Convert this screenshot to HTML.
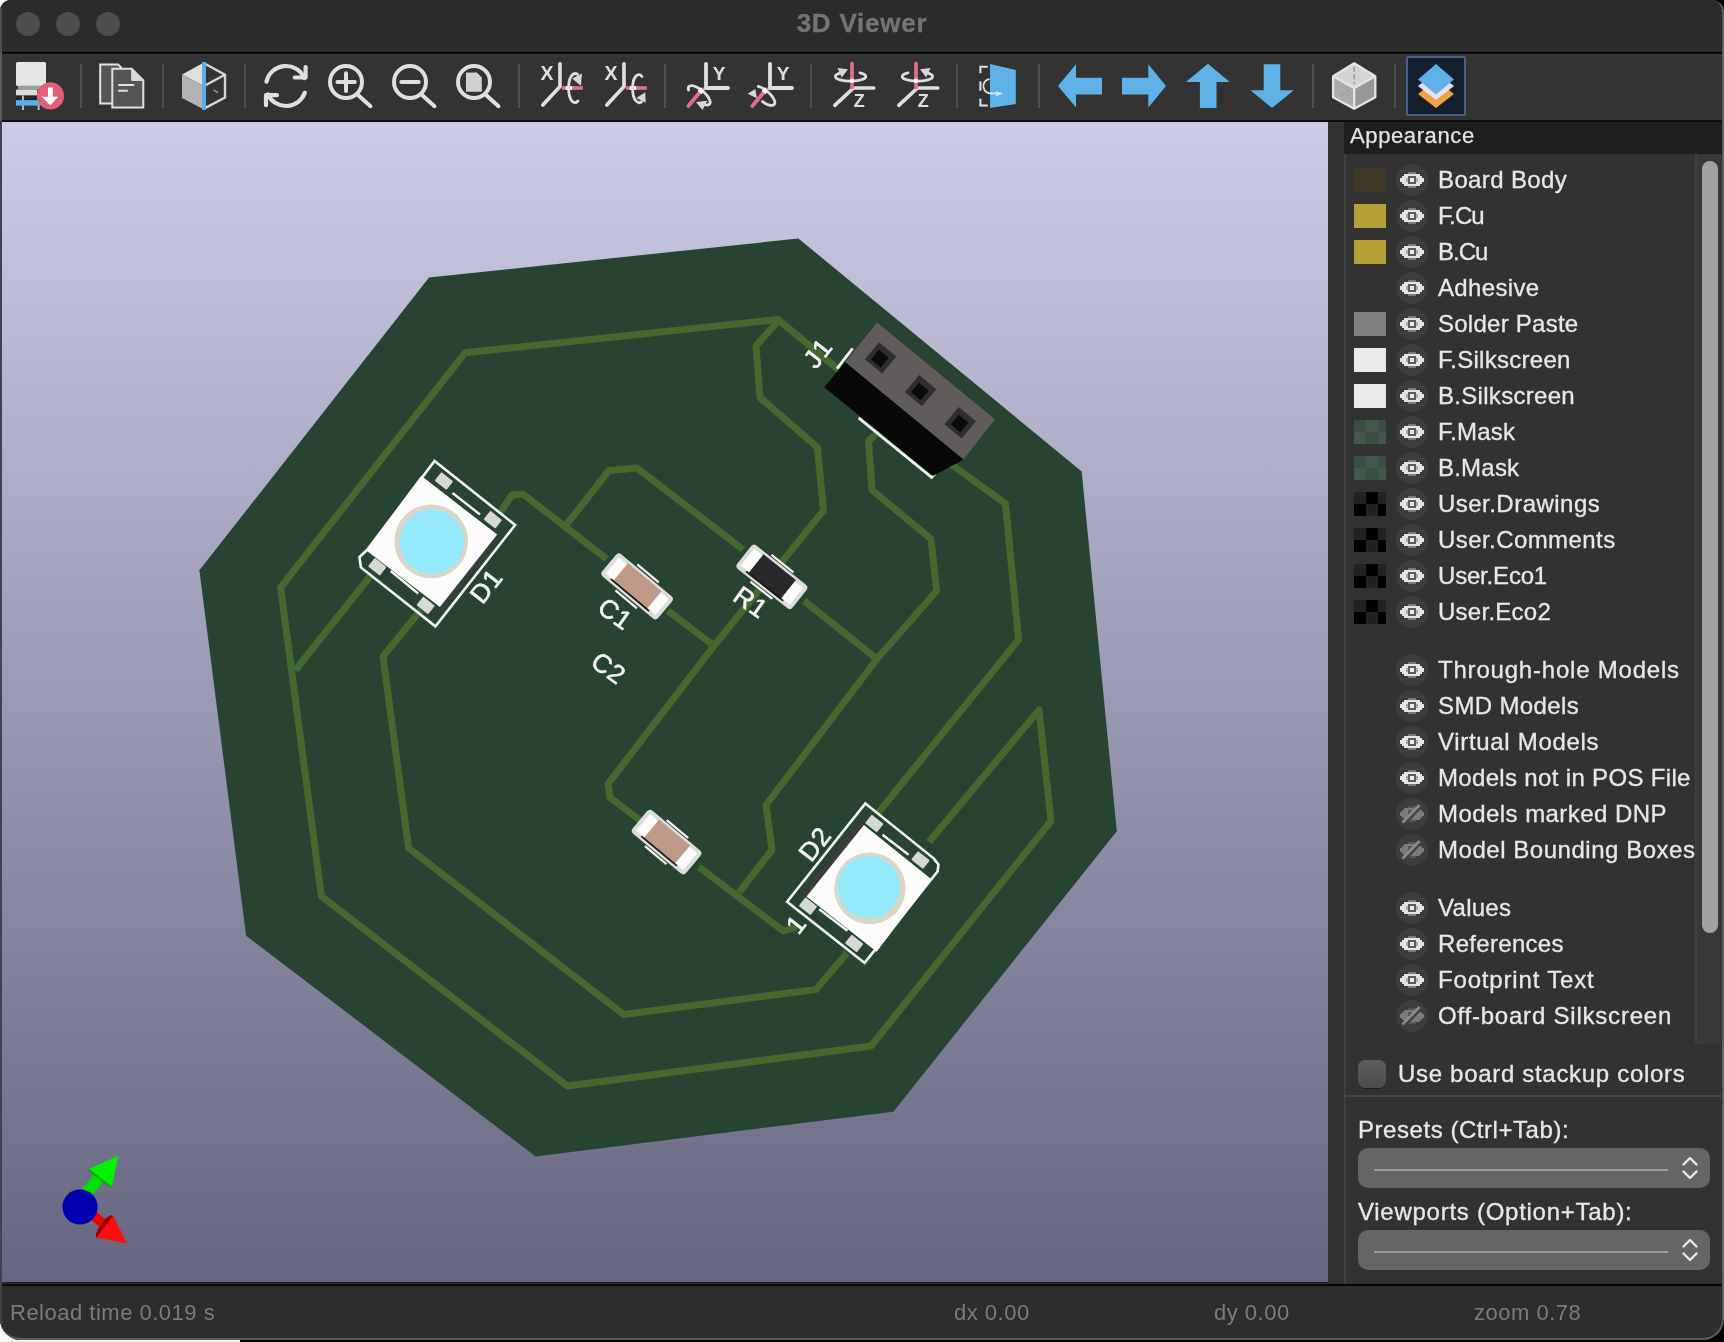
<!DOCTYPE html><html><head><meta charset="utf-8"><title>3D Viewer</title><style>
*{box-sizing:border-box;margin:0;padding:0}
html,body{width:1724px;height:1342px;overflow:hidden;background:#f6f6f6;font-family:"Liberation Sans",sans-serif;}
#win{will-change:transform;position:absolute;left:0;top:0;width:1724px;height:1340px;background:#323232;border-radius:11px 12px 21px 21px;overflow:hidden;}
#title{position:absolute;left:0;top:0;width:1724px;height:52px;background:#292c2a;}
#title .t{position:absolute;left:0;width:1724px;top:8px;text-align:center;font-weight:bold;font-size:26px;line-height:30px;color:#727572;letter-spacing:0.77px;-webkit-text-stroke:0.35px #727572}
.tl{position:absolute;top:12px;width:24px;height:24px;border-radius:12px;background:#4b4e4c}
#tsep{position:absolute;left:0;top:52px;width:1724px;height:2px;background:linear-gradient(#030303 55%,#2a2a2a)}
#tb{position:absolute;left:0;top:54px;width:1724px;height:66px;background:#333333}
#tbsep{position:absolute;left:0;top:120px;width:1724px;height:2px;background:linear-gradient(#1c1c1e,#05070c 45%)}
.sep{position:absolute;top:10px;width:2px;height:44px;background:#505050}
.ic{position:absolute;top:8px;width:48px;height:48px}
#vp{box-shadow:1.500px 1.500px 0 #1b1b25;position:absolute;left:2px;top:122px;width:1326px;height:1160px;background:linear-gradient(#cccce6,#666680);overflow:hidden}
#lb{position:absolute;left:0;top:8px;width:2px;height:1332px;background:linear-gradient(#4c504d 0,#4c504d 44px,#5a5c5a 44px,#5a5c5a 112px,#40444a 114px)}
#bd{position:absolute;left:0;top:0;width:1724px;height:1340px;border-radius:11px 12px 21px 21px;border:solid #5c5e5c;border-width:0 2px 2px 0;pointer-events:none}
#sash{position:absolute;left:1328px;top:122px;width:16px;height:1162px;background:#323232}
#pn{position:absolute;left:1344px;top:122px;width:380px;height:1162px;background:#323232}
#ph{position:absolute;left:0;top:0;width:380px;height:32px;background:#1e1e1e;color:#e4e4e4;font-size:22px;line-height:28px;padding-left:6px;letter-spacing:0.61px;-webkit-text-stroke:0.25px #e4e4e4}
.row{position:absolute;left:0;height:36px;width:352px}
.sw{position:absolute;left:10px;top:6px;width:32px;height:24px}
.eye{position:absolute;left:52px;top:2px;width:32px;height:32px}
.lbl{position:absolute;left:94px;top:0;line-height:36px;font-size:24px;color:#e8e8e8;white-space:nowrap;letter-spacing:0.42px;-webkit-text-stroke:0.3px #e8e8e8}
#sbar{position:absolute;left:0;top:1284px;width:1724px;height:56px;background:#2d2d2d;border-top:2px solid #0a0a0a}
#sbar span{position:absolute;top:14px;font-size:22px;line-height:26px;color:#7b7b7b;letter-spacing:0.5px}
.dd{position:absolute;left:14px;width:352px;height:40px;border-radius:10px;background:#656565}
.dd i{position:absolute;left:16px;top:21px;width:294px;height:2px;background:#9c9c9c}
</style></head><body>
<div style="position:absolute;left:240px;top:0;width:1484px;height:1342px;background:#020202"></div>
<div id="win">
<div id="title"><div class="tl" style="left:16px"></div><div class="tl" style="left:56px"></div><div class="tl" style="left:96px"></div><div class="t">3D Viewer</div></div><div id="tsep"></div>
<div id="tb"><div class="sep" style="left:80px"></div>
<div class="sep" style="left:162px"></div>
<div class="sep" style="left:244px"></div>
<div class="sep" style="left:518px"></div>
<div class="sep" style="left:664px"></div>
<div class="sep" style="left:810px"></div>
<div class="sep" style="left:956px"></div>
<div class="sep" style="left:1038px"></div>
<div class="sep" style="left:1312px"></div>
<div class="sep" style="left:1394px"></div>
<svg style="position:absolute;left:14px;top:6px" width="50" height="52" viewBox="14 60 50 52"><rect x="16" y="62" width="30" height="24" rx="1.500" fill="#e6e6e6"/>
<rect x="18" y="85.700" width="26.600" height="4" fill="#9b9b9b"/>
<rect x="16" y="89.600" width="21" height="6" fill="#dcdcdc"/>
<rect x="16" y="95.500" width="24" height="4.500" fill="#24282c"/>
<rect x="22" y="95.500" width="2" height="14.500" fill="#b4b4b4"/><rect x="37.700" y="95.500" width="2" height="14.500" fill="#b4b4b4"/>
<rect x="16" y="100.200" width="23.500" height="5.400" fill="#5aaee6"/>
<circle cx="50.400" cy="95.900" r="13.600" fill="#e0607a"/>
<path d="M48 87.600 H52.800 V96.800 H58.200 L50.300 105.200 L41.600 96.800 H48Z" fill="#ffffff"/></svg>
<svg style="position:absolute;left:98px;top:6px" width="50" height="52" viewBox="98 60 50 52"><path d="M100.200 64.400 H118 L121 67.400 V103.600 H100.200Z" fill="#565456" stroke="#e4e0e4" stroke-width="2"/>
<path d="M112.300 68.800 H131.700 L143.300 80.400 V107.500 H112.300Z" fill="#565456" stroke="#e4e0e4" stroke-width="2" stroke-linejoin="miter"/>
<path d="M131.700 68.800 L143.300 80.400 H131.700Z" fill="#dcd8dc" stroke="#e4e0e4" stroke-width="1"/>
<path d="M118.200 85 H134.100 M118.200 90.800 H127.800" stroke="#e4e0e4" stroke-width="2"/></svg>
<svg style="position:absolute;left:180px;top:6px" width="50" height="52" viewBox="180 60 50 52"><polygon points="204.0,62.4 182.0,74.4 204.0,86.0" fill="#dedede"/><polygon points="182.0,74.4 204.0,86.0 204.0,109.4 182.0,98.0" fill="#b2b2b2"/><polyline points="204.0,63.2 225.0,74.8 225.0,97.6 204.0,108.6" fill="none" stroke="#d6d6d6" stroke-width="2.400"/><polyline points="225.0,74.8 204.0,86.0" fill="none" stroke="#d6d6d6" stroke-width="2.400"/><path d="M213.500 90 L218 92.500" stroke="#8c8c8c" stroke-width="2"/><rect x="202" y="62" width="4" height="48" fill="#5aaee6"/></svg>
<svg style="position:absolute;left:260px;top:6px" width="52" height="52" viewBox="260 60 52 52"><g fill="none" stroke="#e0dee0" stroke-width="4.200" stroke-linecap="round" stroke-linejoin="round"><path d="M266.470 81.710 A20 20 0 0 1 304.350 78.060"/><path d="M294.700 77.500 H305.600 V67"/><path d="M304.800 92.840 A20 20 0 0 1 267.830 94.360"/><path d="M277 95.200 H266 V105.200"/></g></svg>
<svg style="position:absolute;left:324px;top:6px" width="52" height="52" viewBox="324 60 52 52"><circle cx="346" cy="82" r="16" fill="none" stroke="#e0dee0" stroke-width="4"/><path d="M358.3 95.200 L370.5 106.200" stroke="#e0dee0" stroke-width="4" stroke-linecap="round"/><path d="M337.400 82 H354.800 M346 73.200 V91" stroke="#e0dee0" stroke-width="4" stroke-linecap="round"/></svg>
<svg style="position:absolute;left:388px;top:6px" width="52" height="52" viewBox="388 60 52 52"><circle cx="410" cy="82" r="16" fill="none" stroke="#e0dee0" stroke-width="4"/><path d="M422.3 95.200 L434.5 106.200" stroke="#e0dee0" stroke-width="4" stroke-linecap="round"/><path d="M401.300 82 H418.700" stroke="#e0dee0" stroke-width="4" stroke-linecap="round"/></svg>
<svg style="position:absolute;left:452px;top:6px" width="52" height="52" viewBox="452 60 52 52"><circle cx="474" cy="82" r="16" fill="none" stroke="#e0dee0" stroke-width="4"/><path d="M486.3 95.200 L498.5 106.200" stroke="#e0dee0" stroke-width="4" stroke-linecap="round"/><path d="M466 72.600 H476.800 L481.800 77.600 V91.700 H466Z" fill="#d2d0d2"/></svg>
<svg style="position:absolute;left:536px;top:6px" width="52" height="52" viewBox="536 60 52 52"><g transform="translate(0 0)"><path d="M560 63.800 V86.500 L542.800 105" fill="none" stroke="#e0dee0" stroke-width="3.700" stroke-linecap="round" stroke-linejoin="round"/><path d="M561.800 88 H582.800" stroke="#e0708a" stroke-width="3.700"/><path d="M565.700 88 H572.300" stroke="#ffffff" stroke-width="3.700"/><text x="546.900" y="79.800" font-family="Liberation Sans, sans-serif" font-weight="bold" font-size="19.500" text-anchor="middle" fill="#e0dee0">X</text><path d="M577.500 74.200 C573 71.500 568.600 77 568.600 88 C568.600 99.500 573.500 106 578 101" fill="none" stroke="#e0dee0" stroke-width="2.800" stroke-linecap="round"/><path d="M572.200 78.400 L582 73.400 L580.900 85.700Z" fill="#d8d6d8"/></g></svg>
<svg style="position:absolute;left:600px;top:6px" width="52" height="52" viewBox="600 60 52 52"><g transform="translate(64 0)"><path d="M560 63.800 V86.500 L542.800 105" fill="none" stroke="#e0dee0" stroke-width="3.700" stroke-linecap="round" stroke-linejoin="round"/><path d="M561.800 88 H582.800" stroke="#e0708a" stroke-width="3.700"/><path d="M565.700 88 H572.300" stroke="#ffffff" stroke-width="3.700"/><text x="546.900" y="79.800" font-family="Liberation Sans, sans-serif" font-weight="bold" font-size="19.500" text-anchor="middle" fill="#e0dee0">X</text><path d="M578 76.500 C574 71.500 568.600 77 568.600 88 C568.600 99.500 573 104.500 577.500 102" fill="none" stroke="#e0dee0" stroke-width="2.800" stroke-linecap="round"/><path d="M572.400 97.900 L581.300 92.200 L581.700 102.700Z" fill="#d8d6d8"/></g></svg>
<svg style="position:absolute;left:680px;top:6px" width="54" height="54" viewBox="680 60 54 54"><g transform="translate(0 0)"><path d="M706 63.800 V88 H728" fill="none" stroke="#e0dee0" stroke-width="3.800" stroke-linecap="round" stroke-linejoin="miter"/><text x="719" y="80" font-family="Liberation Sans, sans-serif" font-weight="bold" font-size="19" text-anchor="middle" fill="#e0dee0">Y</text><path d="M702.300 89.300 L688.400 106" stroke="#e0708a" stroke-width="3.800" stroke-linecap="round"/><g transform="rotate(40 698.500 94.500)"><path d="M688 97.500 A13.500 5.500 0 1 1 708 99" fill="none" stroke="#e0dee0" stroke-width="2.800" stroke-linecap="round"/></g><path d="M696 101.900 L707.400 100.700 L702.500 110Z" fill="#d8d6d8"/><path d="M699.600 92.600 L702.500 89.200" stroke="#ffffff" stroke-width="5"/></g></svg>
<svg style="position:absolute;left:744px;top:6px" width="54" height="54" viewBox="744 60 54 54"><g transform="translate(64 0)"><path d="M706 63.800 V88 H728" fill="none" stroke="#e0dee0" stroke-width="3.800" stroke-linecap="round" stroke-linejoin="miter"/><text x="719" y="80" font-family="Liberation Sans, sans-serif" font-weight="bold" font-size="19" text-anchor="middle" fill="#e0dee0">Y</text><path d="M702.300 89.300 L688.400 106" stroke="#e0708a" stroke-width="3.800" stroke-linecap="round"/><g transform="rotate(40 698.500 94.500)"><path d="M690 91 A13.500 5.500 0 1 1 703 99.900" fill="none" stroke="#e0dee0" stroke-width="2.800" stroke-linecap="round"/></g><path d="M683.600 93.800 L691.300 88.900 L692.900 98.300Z" fill="#d8d6d8"/><path d="M699.600 92.600 L702.500 89.200" stroke="#ffffff" stroke-width="5"/></g></svg>
<svg style="position:absolute;left:828px;top:6px" width="54" height="54" viewBox="828 60 54 54"><g transform="translate(0 0)"><path d="M873.700 88 H853.500 L834.800 105.300" fill="none" stroke="#e0dee0" stroke-width="3.700" stroke-linecap="round" stroke-linejoin="round"/><path d="M852 63.500 V87.500" stroke="#e0708a" stroke-width="3.700" stroke-linecap="round"/><path d="M840 73.200 A15.200 4.600 0 1 0 860 72.900" fill="none" stroke="#e0dee0" stroke-width="2.800" stroke-linecap="round"/><path d="M837.500 68 L848 69.300 L841.700 77.500Z" fill="#d8d6d8"/><path d="M852 78.700 V82.700" stroke="#ffffff" stroke-width="3.700"/><text x="859.300" y="107.400" font-family="Liberation Sans, sans-serif" font-weight="bold" font-size="18" text-anchor="middle" fill="#e0dee0">Z</text></g></svg>
<svg style="position:absolute;left:892px;top:6px" width="54" height="54" viewBox="892 60 54 54"><g transform="translate(64 0)"><path d="M873.700 88 H853.500 L834.800 105.300" fill="none" stroke="#e0dee0" stroke-width="3.700" stroke-linecap="round" stroke-linejoin="round"/><path d="M852 63.500 V87.500" stroke="#e0708a" stroke-width="3.700" stroke-linecap="round"/><path d="M844 72.900 A15.200 4.600 0 1 0 864 73.200" fill="none" stroke="#e0dee0" stroke-width="2.800" stroke-linecap="round"/><path d="M866.500 68 L856 69.300 L862.300 77.500Z" fill="#d8d6d8"/><path d="M852 78.700 V82.700" stroke="#ffffff" stroke-width="3.700"/><text x="859.300" y="107.400" font-family="Liberation Sans, sans-serif" font-weight="bold" font-size="18" text-anchor="middle" fill="#e0dee0">Z</text></g></svg>
<svg style="position:absolute;left:972px;top:6px" width="50" height="52" viewBox="972 60 50 52"><polygon points="990,64 1015.800,70 1015.800,104 990,108" fill="#60b1e8"/><path d="M987.800 66.700 H980.400 V73.300 M980.400 81.300 V90.700 M980.400 98.700 V105.400 H987.800" fill="none" stroke="#e4e4e4" stroke-width="2"/><path d="M989.500 78.800 A7.300 7.300 0 0 0 992 93.300" fill="none" stroke="#e4e4e4" stroke-width="1.800"/><path d="M991 93.400 H997" stroke="#d6e8f8" stroke-width="1.800"/><path d="M996 91 L1003 93.600 L996 96.200Z" fill="#d6e8f8"/></svg>
<svg style="position:absolute;left:1056px;top:6px" width="50" height="52" viewBox="1056 60 50 52"><polygon points="1058,86 1076,64.300 1076,77.800 1102,77.800 1102,94.400 1076,94.400 1076,107.500" fill="#60b1e8"/></svg>
<svg style="position:absolute;left:1120px;top:6px" width="50" height="52" viewBox="1120 60 50 52"><polygon points="1122,77.800 1148.300,77.800 1148.300,64.300 1166,86 1148.300,107.500 1148.300,94.400 1122,94.400" fill="#60b1e8"/></svg>
<svg style="position:absolute;left:1184px;top:6px" width="50" height="52" viewBox="1184 60 50 52"><polygon points="1207.900,63.800 1229.700,81.900 1216.500,81.900 1216.500,108 1199.900,108 1199.900,81.900 1186,81.900" fill="#60b1e8"/></svg>
<svg style="position:absolute;left:1248px;top:6px" width="50" height="52" viewBox="1248 60 50 52"><polygon points="1263.700,64.300 1280.300,64.300 1280.300,90.200 1293.800,90.200 1272,108 1250.400,90.200 1263.700,90.200" fill="#60b1e8"/></svg>
<svg style="position:absolute;left:1330px;top:6px" width="50" height="52" viewBox="1330 60 50 52"><g transform="translate(1354.200 86) scale(0.955) translate(-1354.200 -86)"><polygon points="1354.200,62.200 1376.300,75.700 1354.200,88 1332.100,75.700" fill="#d4d4d4"/><polygon points="1332.100,75.700 1354.200,88 1354.200,109.800 1332.100,97.800" fill="#ababab"/><polygon points="1376.300,75.700 1354.200,88 1354.200,109.800 1376.300,97.800" fill="#979797"/><path d="M1354.200 62.200 L1376.300 75.700 V97.800 L1354.200 109.800 L1332.100 97.800 V75.700Z M1332.100 75.700 L1354.200 88 L1376.300 75.700 M1354.200 88 V109.800" fill="none" stroke="#e4e4e4" stroke-width="2.400" stroke-linejoin="round"/><path d="M1354.200 66 V84" stroke="#8e8e8e" stroke-width="1.400" stroke-dasharray="5 3"/><path d="M1340 95.500 L1350 90" stroke="#9a9a9a" stroke-width="1.400" stroke-dasharray="5 3"/></g></svg>
<div style="position:absolute;left:1406px;top:2px;width:60px;height:60px;background:#15202e;border:2px solid #4a6088;border-radius:2px"></div>
<svg style="position:absolute;left:1412px;top:6px" width="50" height="52" viewBox="1412 60 50 52"><polygon points="1436,80 1454,94 1436,108 1418,94" fill="#f0a244"/><polygon points="1436,72 1454,86 1436,100 1418,86" fill="#e2e2f2"/><polygon points="1436,63.900 1454,79.400 1436,94.600 1418,79.400" fill="#60b1e8"/></svg></div><div id="tbsep"></div>
<div id="vp"><svg style="position:absolute;left:0;top:0" width="1326" height="1160" viewBox="2 122 1326 1160" font-family="Liberation Sans, sans-serif">
<polygon points="429.0,277.5 798.4,238.5 1081.7,471.5 1116.8,831.3 893.3,1111.7 535.6,1156.4 246.1,935.7 199.4,570.3" fill="#264431" />
<polyline points="840.0,371.0 778.0,319.5 465.0,352.8 280.6,587.5 321.4,896.3 567.4,1086.0 871.0,1046.0 1051.0,821.0 1039.0,710.0 929.0,842.0" fill="none" stroke="#43692f" stroke-width="7" stroke-linejoin="round"/>
<polyline points="295.5,670.0 372.0,574.0" fill="none" stroke="#43692f" stroke-width="7" stroke-linejoin="round"/>
<polyline points="778.0,321.0 756.0,346.0 760.0,397.5 817.4,447.3 823.5,510.6 713.9,645.8 608.0,784.0 610.0,797.5 641.0,821.0" fill="none" stroke="#43692f" stroke-width="7" stroke-linejoin="round"/>
<polyline points="699.0,867.0 783.4,931.0 797.0,927.0" fill="none" stroke="#43692f" stroke-width="7" stroke-linejoin="round"/>
<polyline points="500.0,513.0 512.0,495.0 523.0,494.0 606.7,559.0" fill="none" stroke="#43692f" stroke-width="7" stroke-linejoin="round"/>
<polyline points="667.6,610.5 713.9,645.8" fill="none" stroke="#43692f" stroke-width="7" stroke-linejoin="round"/>
<polyline points="565.0,526.5 609.0,470.5 637.0,468.0 743.0,549.6" fill="none" stroke="#43692f" stroke-width="7" stroke-linejoin="round"/>
<polyline points="804.0,600.8 877.0,659.0" fill="none" stroke="#43692f" stroke-width="7" stroke-linejoin="round"/>
<polyline points="880.0,430.0 868.5,441.0 872.0,490.0 931.0,539.0 936.6,591.0 877.0,659.0 766.0,805.0 772.0,850.0 739.0,892.5" fill="none" stroke="#43692f" stroke-width="7" stroke-linejoin="round"/>
<polyline points="950.0,463.5 1005.5,503.6 1018.6,639.6 878.0,813.0" fill="none" stroke="#43692f" stroke-width="7" stroke-linejoin="round"/>
<polyline points="421.0,610.0 383.0,656.4 408.6,848.0 623.6,1014.5 816.0,989.5 847.0,953.0" fill="none" stroke="#43692f" stroke-width="7" stroke-linejoin="round"/>
<polygon points="434.6,460.9 515.1,525 435.4,626.3 360.9,567.4 359.4,557 366.8,550.3" fill="none" stroke="#f4f4f4" stroke-width="2.6"/>
<rect x="436.4" y="475.5" width="15.0" height="11.0" rx="1.0" fill="#d6d8d5" transform="rotate(38.5 443.9 481.0)" />
<rect x="485.3" y="514.2" width="15.0" height="11.0" rx="1.0" fill="#d6d8d5" transform="rotate(38.5 492.8 519.7)" />
<rect x="369.8" y="561.2" width="15.0" height="11.0" rx="1.0" fill="#d6d8d5" transform="rotate(38.5 377.3 566.7)" />
<rect x="418.2" y="599.9" width="15.0" height="11.0" rx="1.0" fill="#d6d8d5" transform="rotate(38.5 425.7 605.4)" />
<path d="M452.5 493 L480 514.5 M390.7 571 L418.2 593.5" stroke="#f4f4f4" stroke-width="2.4" fill="none"/>
<polygon points="497.2,534.6 500.6,537.2 443.2,609.5 439.9,606.9" fill="#3b3c3a" />
<polygon points="421.2,475.8 497.2,534.6 439.9,606.9 366.0,550.3" fill="#fcfcfc" />
<circle cx="431.2" cy="541.3" r="36.9" fill="#d9d6c8"/>
<circle cx="432" cy="542" r="32.2" fill="#95e9fd"/>
<text x="486.0" y="585.8" font-size="26" fill="#f4f4f4" stroke="#f4f4f4" stroke-width="0.600" letter-spacing="0.800" text-anchor="middle" transform="rotate(-52.0 486.0 585.8)" dy="9.3">D1</text>
<polygon points="865.4,803.4 933.9,858.6 938.4,864.5 937.7,871.2 864.6,962.9 787.1,901.8" fill="none" stroke="#f4f4f4" stroke-width="2.6"/>
<rect x="866.8" y="818.0" width="15.0" height="11.0" rx="1.0" fill="#d6d8d5" transform="rotate(38.5 874.3 823.5)" />
<rect x="913.0" y="854.5" width="15.0" height="11.0" rx="1.0" fill="#d6d8d5" transform="rotate(38.5 920.5 860.0)" />
<rect x="800.5" y="900.7" width="15.0" height="11.0" rx="1.0" fill="#d6d8d5" transform="rotate(38.5 808.0 906.2)" />
<rect x="846.7" y="938.0" width="15.0" height="11.0" rx="1.0" fill="#d6d8d5" transform="rotate(38.5 854.2 943.5)" />
<path d="M882.5 834.7 L908.6 854.8 M819.2 909.2 L847.5 930.8" stroke="#f4f4f4" stroke-width="2.4" fill="none"/>
<polygon points="863.9,825.0 860.0,820.5 802.0,893.6 806.5,896.6" fill="#3c3a3a" />
<polygon points="863.9,825.0 931.7,879.4 876.6,951.7 806.5,896.6" fill="#fcfcfc" />
<circle cx="869.9" cy="888.4" r="35.8" fill="#d9d6c8"/>
<circle cx="868.8" cy="887.4" r="31.2" fill="#95e9fd"/>
<text x="814.7" y="843.7" font-size="26" fill="#f4f4f4" stroke="#f4f4f4" stroke-width="0.600" letter-spacing="0.800" text-anchor="middle" transform="rotate(-52.0 814.7 843.7)" dy="9.3">D2</text>
<text x="796.0" y="924.0" font-size="26" fill="#f4f4f4" stroke="#f4f4f4" stroke-width="0.600" letter-spacing="0.800" text-anchor="middle" transform="rotate(-52.0 796.0 924.0)" dy="9.3">1</text>
<g transform="rotate(39.9 637.1 586.4)" stroke="#f4f4f4" stroke-width="2.2"><line x1="623.1" y1="569.4" x2="651.1" y2="569.4"/><line x1="623.1" y1="603.4" x2="651.1" y2="603.4"/></g>
<g transform="rotate(39.9 637.1 586.4)"><rect x="600.6" y="571.9" width="73.0" height="29.0" rx="4" fill="#dcdcda"/><rect x="615.1" y="574.4" width="44.0" height="24.0" fill="#c09a88"/><rect x="612.1" y="596.7" width="50.0" height="1.7" fill="#1c1a18"/><rect x="604.6" y="575.9" width="10.5" height="20.5" fill="#fbfbfb"/><rect x="659.1" y="575.9" width="10.5" height="20.5" fill="#fbfbfb"/></g>
<g transform="rotate(38.4 771.9 576.9)" stroke="#f4f4f4" stroke-width="2.2"><line x1="757.9" y1="559.9" x2="785.9" y2="559.9"/><line x1="757.9" y1="593.9" x2="785.9" y2="593.9"/></g>
<g transform="rotate(38.4 771.9 576.9)"><rect x="736.6" y="561.9" width="70.6" height="30.0" rx="4" fill="#dcdcda"/><rect x="751.1" y="564.4" width="41.6" height="25.0" fill="#29292b"/><rect x="748.1" y="587.7" width="47.6" height="1.7" fill="#1c1a18"/><rect x="740.6" y="565.9" width="10.5" height="21.5" fill="#fbfbfb"/><rect x="792.7" y="565.9" width="10.5" height="21.5" fill="#fbfbfb"/></g>
<g transform="rotate(39.8 666.6 842.1)" stroke="#f4f4f4" stroke-width="2.2"><line x1="652.6" y1="825.1" x2="680.6" y2="825.1"/><line x1="652.6" y1="859.1" x2="680.6" y2="859.1"/></g>
<g transform="rotate(39.8 666.6 842.1)"><rect x="631.8" y="827.1" width="69.6" height="30.0" rx="4" fill="#dcdcda"/><rect x="646.3" y="829.6" width="40.6" height="25.0" fill="#c09a88"/><rect x="643.3" y="852.9" width="46.6" height="1.7" fill="#1c1a18"/><rect x="635.8" y="831.1" width="10.5" height="21.5" fill="#fbfbfb"/><rect x="686.9" y="831.1" width="10.5" height="21.5" fill="#fbfbfb"/></g>
<text x="615.5" y="613.6" font-size="26" fill="#f4f4f4" stroke="#f4f4f4" stroke-width="0.600" letter-spacing="0.800" text-anchor="middle" transform="rotate(35.5 615.5 613.6)" dy="9.3">C1</text>
<text x="608.8" y="667.9" font-size="26" fill="#f4f4f4" stroke="#f4f4f4" stroke-width="0.600" letter-spacing="0.800" text-anchor="middle" transform="rotate(35.5 608.8 667.9)" dy="9.3">C2</text>
<text x="751.0" y="602.0" font-size="26" fill="#f4f4f4" stroke="#f4f4f4" stroke-width="0.600" letter-spacing="0.800" text-anchor="middle" transform="rotate(35.5 751.0 602.0)" dy="9.3">R1</text>
<path d="M837 368.6 L852.6 348.4 M858.6 417.8 L931.6 477.4 L935.3 473.6" stroke="#f4f4f4" stroke-width="2.8" fill="none"/>
<polygon points="845.2,361.9 963.6,459.5 933.1,475.9 824.3,387.2" fill="#080808" />
<polygon points="877.2,322.4 994.9,419.2 963.6,459.5 845.2,361.9" fill="#5f5c5b" />
<rect x="869.5" y="346.7" width="22.3" height="22.3" rx="0.0" fill="#2f2d2d" transform="rotate(39.6 880.6 357.8)" />
<rect x="873.6" y="352.4" width="12.5" height="12.5" rx="0.0" fill="#0a0a0a" transform="rotate(39.6 879.8 358.6)" />
<rect x="909.5" y="379.5" width="22.3" height="22.3" rx="0.0" fill="#2f2d2d" transform="rotate(39.6 920.6 390.6)" />
<rect x="913.6" y="385.2" width="12.5" height="12.5" rx="0.0" fill="#0a0a0a" transform="rotate(39.6 919.8 391.4)" />
<rect x="949.1" y="411.6" width="22.3" height="22.3" rx="0.0" fill="#2f2d2d" transform="rotate(39.6 960.2 422.7)" />
<rect x="953.2" y="417.2" width="12.5" height="12.5" rx="0.0" fill="#0a0a0a" transform="rotate(39.6 959.4 423.5)" />
<text x="817.6" y="352.9" font-size="26" fill="#f4f4f4" stroke="#f4f4f4" stroke-width="0.600" letter-spacing="0.800" text-anchor="middle" transform="rotate(-52.0 817.6 352.9)" dy="9.3">J1</text>
<g>
<path d="M86 1216 L102.500 1229 L108 1221.500 L92 1208Z" fill="#f00000"/>
<ellipse cx="104.400" cy="1226.500" rx="13.500" ry="4.200" fill="#9c0000" transform="rotate(-54 104.400 1226.500)"/>
<path d="M113.100 1215.700 L127 1243.600 L96.600 1237.500Z" fill="#ff0c0c"/>
<path d="M82 1189 L97 1171 L106 1178 L92 1196Z" fill="#00e000"/>
<path d="M89 1169 L118.300 1155.700 L112 1186.500Z" fill="#00f000"/>
<path d="M89 1169 L112 1186.500 L110 1187 L89 1172Z" fill="#00b000"/>
<circle cx="80" cy="1207" r="17.600" fill="#0000ae"/>
</g>
</svg></div>
<div id="sash"></div>
<div id="pn"><div id="ph">Appearance</div>
<div style="position:absolute;left:0;top:32px;width:1.500px;height:1130px;background:#404040"></div>
<div style="position:absolute;left:0;top:32px;width:380px;height:890px;overflow:hidden">
<div class="row" style="top:8px"><div class="sw" style="background:#3f3a27"></div><svg class="eye" viewBox="-16 -16 32 32"><circle r="16" fill="#3e3d3e"/><g fill="#e6e2e6"><rect x="-4" y="-8" width="8" height="2" fill="#7c7a7c"/><rect x="-4" y="6" width="8" height="2" fill="#7c7a7c"/><rect x="-8" y="-6" width="16" height="2"/><rect x="-10" y="-4" width="20" height="2"/><rect x="-12" y="-2" width="24" height="4"/><rect x="-10" y="2" width="20" height="2"/><rect x="-8" y="4" width="16" height="2"/></g><rect x="-6" y="-2" width="12" height="4" fill="#aaa8aa"/><rect x="-4" y="-4" width="8" height="8" fill="#5e5c5e"/><rect x="-2" y="-2" width="4" height="4" fill="#eeeaee"/></svg><div class="lbl" style="letter-spacing:0.375px">Board Body</div></div>
<div class="row" style="top:44px"><div class="sw" style="background:#b5a136"></div><svg class="eye" viewBox="-16 -16 32 32"><circle r="16" fill="#3e3d3e"/><g fill="#e6e2e6"><rect x="-4" y="-8" width="8" height="2" fill="#7c7a7c"/><rect x="-4" y="6" width="8" height="2" fill="#7c7a7c"/><rect x="-8" y="-6" width="16" height="2"/><rect x="-10" y="-4" width="20" height="2"/><rect x="-12" y="-2" width="24" height="4"/><rect x="-10" y="2" width="20" height="2"/><rect x="-8" y="4" width="16" height="2"/></g><rect x="-6" y="-2" width="12" height="4" fill="#aaa8aa"/><rect x="-4" y="-4" width="8" height="8" fill="#5e5c5e"/><rect x="-2" y="-2" width="4" height="4" fill="#eeeaee"/></svg><div class="lbl" style="letter-spacing:-0.886px">F.Cu</div></div>
<div class="row" style="top:80px"><div class="sw" style="background:#b5a136"></div><svg class="eye" viewBox="-16 -16 32 32"><circle r="16" fill="#3e3d3e"/><g fill="#e6e2e6"><rect x="-4" y="-8" width="8" height="2" fill="#7c7a7c"/><rect x="-4" y="6" width="8" height="2" fill="#7c7a7c"/><rect x="-8" y="-6" width="16" height="2"/><rect x="-10" y="-4" width="20" height="2"/><rect x="-12" y="-2" width="24" height="4"/><rect x="-10" y="2" width="20" height="2"/><rect x="-8" y="4" width="16" height="2"/></g><rect x="-6" y="-2" width="12" height="4" fill="#aaa8aa"/><rect x="-4" y="-4" width="8" height="8" fill="#5e5c5e"/><rect x="-2" y="-2" width="4" height="4" fill="#eeeaee"/></svg><div class="lbl" style="letter-spacing:-1.020px">B.Cu</div></div>
<div class="row" style="top:116px"><svg class="eye" viewBox="-16 -16 32 32"><circle r="16" fill="#3e3d3e"/><g fill="#e6e2e6"><rect x="-4" y="-8" width="8" height="2" fill="#7c7a7c"/><rect x="-4" y="6" width="8" height="2" fill="#7c7a7c"/><rect x="-8" y="-6" width="16" height="2"/><rect x="-10" y="-4" width="20" height="2"/><rect x="-12" y="-2" width="24" height="4"/><rect x="-10" y="2" width="20" height="2"/><rect x="-8" y="4" width="16" height="2"/></g><rect x="-6" y="-2" width="12" height="4" fill="#aaa8aa"/><rect x="-4" y="-4" width="8" height="8" fill="#5e5c5e"/><rect x="-2" y="-2" width="4" height="4" fill="#eeeaee"/></svg><div class="lbl" style="letter-spacing:0.338px">Adhesive</div></div>
<div class="row" style="top:152px"><div class="sw" style="background:#808080"></div><svg class="eye" viewBox="-16 -16 32 32"><circle r="16" fill="#3e3d3e"/><g fill="#e6e2e6"><rect x="-4" y="-8" width="8" height="2" fill="#7c7a7c"/><rect x="-4" y="6" width="8" height="2" fill="#7c7a7c"/><rect x="-8" y="-6" width="16" height="2"/><rect x="-10" y="-4" width="20" height="2"/><rect x="-12" y="-2" width="24" height="4"/><rect x="-10" y="2" width="20" height="2"/><rect x="-8" y="4" width="16" height="2"/></g><rect x="-6" y="-2" width="12" height="4" fill="#aaa8aa"/><rect x="-4" y="-4" width="8" height="8" fill="#5e5c5e"/><rect x="-2" y="-2" width="4" height="4" fill="#eeeaee"/></svg><div class="lbl" style="letter-spacing:0.253px">Solder Paste</div></div>
<div class="row" style="top:188px"><div class="sw" style="background:#ebebeb"></div><svg class="eye" viewBox="-16 -16 32 32"><circle r="16" fill="#3e3d3e"/><g fill="#e6e2e6"><rect x="-4" y="-8" width="8" height="2" fill="#7c7a7c"/><rect x="-4" y="6" width="8" height="2" fill="#7c7a7c"/><rect x="-8" y="-6" width="16" height="2"/><rect x="-10" y="-4" width="20" height="2"/><rect x="-12" y="-2" width="24" height="4"/><rect x="-10" y="2" width="20" height="2"/><rect x="-8" y="4" width="16" height="2"/></g><rect x="-6" y="-2" width="12" height="4" fill="#aaa8aa"/><rect x="-4" y="-4" width="8" height="8" fill="#5e5c5e"/><rect x="-2" y="-2" width="4" height="4" fill="#eeeaee"/></svg><div class="lbl" style="letter-spacing:0.275px">F.Silkscreen</div></div>
<div class="row" style="top:224px"><div class="sw" style="background:#ebebeb"></div><svg class="eye" viewBox="-16 -16 32 32"><circle r="16" fill="#3e3d3e"/><g fill="#e6e2e6"><rect x="-4" y="-8" width="8" height="2" fill="#7c7a7c"/><rect x="-4" y="6" width="8" height="2" fill="#7c7a7c"/><rect x="-8" y="-6" width="16" height="2"/><rect x="-10" y="-4" width="20" height="2"/><rect x="-12" y="-2" width="24" height="4"/><rect x="-10" y="2" width="20" height="2"/><rect x="-8" y="4" width="16" height="2"/></g><rect x="-6" y="-2" width="12" height="4" fill="#aaa8aa"/><rect x="-4" y="-4" width="8" height="8" fill="#5e5c5e"/><rect x="-2" y="-2" width="4" height="4" fill="#eeeaee"/></svg><div class="lbl" style="letter-spacing:0.301px">B.Silkscreen</div></div>
<div class="row" style="top:260px"><svg class="sw" viewBox="0 0 32 24"><rect width="32" height="24" fill="#3a4f44"/><rect x="12" y="0" width="12" height="12" fill="#42584c"/><rect x="0" y="12" width="12" height="12" fill="#42584c"/><rect x="24" y="12" width="8" height="12" fill="#42584c"/></svg><svg class="eye" viewBox="-16 -16 32 32"><circle r="16" fill="#3e3d3e"/><g fill="#e6e2e6"><rect x="-4" y="-8" width="8" height="2" fill="#7c7a7c"/><rect x="-4" y="6" width="8" height="2" fill="#7c7a7c"/><rect x="-8" y="-6" width="16" height="2"/><rect x="-10" y="-4" width="20" height="2"/><rect x="-12" y="-2" width="24" height="4"/><rect x="-10" y="2" width="20" height="2"/><rect x="-8" y="4" width="16" height="2"/></g><rect x="-6" y="-2" width="12" height="4" fill="#aaa8aa"/><rect x="-4" y="-4" width="8" height="8" fill="#5e5c5e"/><rect x="-2" y="-2" width="4" height="4" fill="#eeeaee"/></svg><div class="lbl" style="letter-spacing:0.197px">F.Mask</div></div>
<div class="row" style="top:296px"><svg class="sw" viewBox="0 0 32 24"><rect width="32" height="24" fill="#3a4f44"/><rect x="12" y="0" width="12" height="12" fill="#42584c"/><rect x="0" y="12" width="12" height="12" fill="#42584c"/><rect x="24" y="12" width="8" height="12" fill="#42584c"/></svg><svg class="eye" viewBox="-16 -16 32 32"><circle r="16" fill="#3e3d3e"/><g fill="#e6e2e6"><rect x="-4" y="-8" width="8" height="2" fill="#7c7a7c"/><rect x="-4" y="6" width="8" height="2" fill="#7c7a7c"/><rect x="-8" y="-6" width="16" height="2"/><rect x="-10" y="-4" width="20" height="2"/><rect x="-12" y="-2" width="24" height="4"/><rect x="-10" y="2" width="20" height="2"/><rect x="-8" y="4" width="16" height="2"/></g><rect x="-6" y="-2" width="12" height="4" fill="#aaa8aa"/><rect x="-4" y="-4" width="8" height="8" fill="#5e5c5e"/><rect x="-2" y="-2" width="4" height="4" fill="#eeeaee"/></svg><div class="lbl" style="letter-spacing:0.217px">B.Mask</div></div>
<div class="row" style="top:332px"><svg class="sw" viewBox="0 0 32 24"><rect width="32" height="24" fill="#222222"/><rect x="12" y="0" width="12" height="12" fill="#000000"/><rect x="0" y="12" width="12" height="12" fill="#000000"/><rect x="24" y="12" width="8" height="12" fill="#000000"/></svg><svg class="eye" viewBox="-16 -16 32 32"><circle r="16" fill="#3e3d3e"/><g fill="#e6e2e6"><rect x="-4" y="-8" width="8" height="2" fill="#7c7a7c"/><rect x="-4" y="6" width="8" height="2" fill="#7c7a7c"/><rect x="-8" y="-6" width="16" height="2"/><rect x="-10" y="-4" width="20" height="2"/><rect x="-12" y="-2" width="24" height="4"/><rect x="-10" y="2" width="20" height="2"/><rect x="-8" y="4" width="16" height="2"/></g><rect x="-6" y="-2" width="12" height="4" fill="#aaa8aa"/><rect x="-4" y="-4" width="8" height="8" fill="#5e5c5e"/><rect x="-2" y="-2" width="4" height="4" fill="#eeeaee"/></svg><div class="lbl" style="letter-spacing:0.471px">User.Drawings</div></div>
<div class="row" style="top:368px"><svg class="sw" viewBox="0 0 32 24"><rect width="32" height="24" fill="#222222"/><rect x="12" y="0" width="12" height="12" fill="#000000"/><rect x="0" y="12" width="12" height="12" fill="#000000"/><rect x="24" y="12" width="8" height="12" fill="#000000"/></svg><svg class="eye" viewBox="-16 -16 32 32"><circle r="16" fill="#3e3d3e"/><g fill="#e6e2e6"><rect x="-4" y="-8" width="8" height="2" fill="#7c7a7c"/><rect x="-4" y="6" width="8" height="2" fill="#7c7a7c"/><rect x="-8" y="-6" width="16" height="2"/><rect x="-10" y="-4" width="20" height="2"/><rect x="-12" y="-2" width="24" height="4"/><rect x="-10" y="2" width="20" height="2"/><rect x="-8" y="4" width="16" height="2"/></g><rect x="-6" y="-2" width="12" height="4" fill="#aaa8aa"/><rect x="-4" y="-4" width="8" height="8" fill="#5e5c5e"/><rect x="-2" y="-2" width="4" height="4" fill="#eeeaee"/></svg><div class="lbl" style="letter-spacing:0.429px">User.Comments</div></div>
<div class="row" style="top:404px"><svg class="sw" viewBox="0 0 32 24"><rect width="32" height="24" fill="#222222"/><rect x="12" y="0" width="12" height="12" fill="#000000"/><rect x="0" y="12" width="12" height="12" fill="#000000"/><rect x="24" y="12" width="8" height="12" fill="#000000"/></svg><svg class="eye" viewBox="-16 -16 32 32"><circle r="16" fill="#3e3d3e"/><g fill="#e6e2e6"><rect x="-4" y="-8" width="8" height="2" fill="#7c7a7c"/><rect x="-4" y="6" width="8" height="2" fill="#7c7a7c"/><rect x="-8" y="-6" width="16" height="2"/><rect x="-10" y="-4" width="20" height="2"/><rect x="-12" y="-2" width="24" height="4"/><rect x="-10" y="2" width="20" height="2"/><rect x="-8" y="4" width="16" height="2"/></g><rect x="-6" y="-2" width="12" height="4" fill="#aaa8aa"/><rect x="-4" y="-4" width="8" height="8" fill="#5e5c5e"/><rect x="-2" y="-2" width="4" height="4" fill="#eeeaee"/></svg><div class="lbl" style="letter-spacing:-0.190px">User.Eco1</div></div>
<div class="row" style="top:440px"><svg class="sw" viewBox="0 0 32 24"><rect width="32" height="24" fill="#222222"/><rect x="12" y="0" width="12" height="12" fill="#000000"/><rect x="0" y="12" width="12" height="12" fill="#000000"/><rect x="24" y="12" width="8" height="12" fill="#000000"/></svg><svg class="eye" viewBox="-16 -16 32 32"><circle r="16" fill="#3e3d3e"/><g fill="#e6e2e6"><rect x="-4" y="-8" width="8" height="2" fill="#7c7a7c"/><rect x="-4" y="6" width="8" height="2" fill="#7c7a7c"/><rect x="-8" y="-6" width="16" height="2"/><rect x="-10" y="-4" width="20" height="2"/><rect x="-12" y="-2" width="24" height="4"/><rect x="-10" y="2" width="20" height="2"/><rect x="-8" y="4" width="16" height="2"/></g><rect x="-6" y="-2" width="12" height="4" fill="#aaa8aa"/><rect x="-4" y="-4" width="8" height="8" fill="#5e5c5e"/><rect x="-2" y="-2" width="4" height="4" fill="#eeeaee"/></svg><div class="lbl" style="letter-spacing:0.260px">User.Eco2</div></div>
<div class="row" style="top:498px"><svg class="eye" viewBox="-16 -16 32 32"><circle r="16" fill="#3e3d3e"/><g fill="#e6e2e6"><rect x="-4" y="-8" width="8" height="2" fill="#7c7a7c"/><rect x="-4" y="6" width="8" height="2" fill="#7c7a7c"/><rect x="-8" y="-6" width="16" height="2"/><rect x="-10" y="-4" width="20" height="2"/><rect x="-12" y="-2" width="24" height="4"/><rect x="-10" y="2" width="20" height="2"/><rect x="-8" y="4" width="16" height="2"/></g><rect x="-6" y="-2" width="12" height="4" fill="#aaa8aa"/><rect x="-4" y="-4" width="8" height="8" fill="#5e5c5e"/><rect x="-2" y="-2" width="4" height="4" fill="#eeeaee"/></svg><div class="lbl" style="letter-spacing:0.795px">Through-hole Models</div></div>
<div class="row" style="top:534px"><svg class="eye" viewBox="-16 -16 32 32"><circle r="16" fill="#3e3d3e"/><g fill="#e6e2e6"><rect x="-4" y="-8" width="8" height="2" fill="#7c7a7c"/><rect x="-4" y="6" width="8" height="2" fill="#7c7a7c"/><rect x="-8" y="-6" width="16" height="2"/><rect x="-10" y="-4" width="20" height="2"/><rect x="-12" y="-2" width="24" height="4"/><rect x="-10" y="2" width="20" height="2"/><rect x="-8" y="4" width="16" height="2"/></g><rect x="-6" y="-2" width="12" height="4" fill="#aaa8aa"/><rect x="-4" y="-4" width="8" height="8" fill="#5e5c5e"/><rect x="-2" y="-2" width="4" height="4" fill="#eeeaee"/></svg><div class="lbl" style="letter-spacing:0.369px">SMD Models</div></div>
<div class="row" style="top:570px"><svg class="eye" viewBox="-16 -16 32 32"><circle r="16" fill="#3e3d3e"/><g fill="#e6e2e6"><rect x="-4" y="-8" width="8" height="2" fill="#7c7a7c"/><rect x="-4" y="6" width="8" height="2" fill="#7c7a7c"/><rect x="-8" y="-6" width="16" height="2"/><rect x="-10" y="-4" width="20" height="2"/><rect x="-12" y="-2" width="24" height="4"/><rect x="-10" y="2" width="20" height="2"/><rect x="-8" y="4" width="16" height="2"/></g><rect x="-6" y="-2" width="12" height="4" fill="#aaa8aa"/><rect x="-4" y="-4" width="8" height="8" fill="#5e5c5e"/><rect x="-2" y="-2" width="4" height="4" fill="#eeeaee"/></svg><div class="lbl" style="letter-spacing:0.681px">Virtual Models</div></div>
<div class="row" style="top:606px"><svg class="eye" viewBox="-16 -16 32 32"><circle r="16" fill="#3e3d3e"/><g fill="#e6e2e6"><rect x="-4" y="-8" width="8" height="2" fill="#7c7a7c"/><rect x="-4" y="6" width="8" height="2" fill="#7c7a7c"/><rect x="-8" y="-6" width="16" height="2"/><rect x="-10" y="-4" width="20" height="2"/><rect x="-12" y="-2" width="24" height="4"/><rect x="-10" y="2" width="20" height="2"/><rect x="-8" y="4" width="16" height="2"/></g><rect x="-6" y="-2" width="12" height="4" fill="#aaa8aa"/><rect x="-4" y="-4" width="8" height="8" fill="#5e5c5e"/><rect x="-2" y="-2" width="4" height="4" fill="#eeeaee"/></svg><div class="lbl" style="letter-spacing:0.332px">Models not in POS File</div></div>
<div class="row" style="top:642px"><svg class="eye" viewBox="-16 -16 32 32"><circle r="16" fill="#3e3d3e"/><g fill="#7b7b7b"><rect x="-4" y="-8" width="8" height="2" fill="#555"/><rect x="-4" y="6" width="8" height="2" fill="#555"/><rect x="-8" y="-6" width="16" height="2"/><rect x="-10" y="-4" width="20" height="2"/><rect x="-12" y="-2" width="24" height="4"/><rect x="-10" y="2" width="20" height="2"/><rect x="-8" y="4" width="16" height="2"/></g><rect x="-4" y="-4" width="4" height="4" fill="#555"/><path d="M-6.500 9 L10 -8.500" stroke="#444344" stroke-width="3"/><path d="M-9.500 8.500 L7.500 -9" stroke="#8a8a8a" stroke-width="2.600"/></svg><div class="lbl" style="letter-spacing:0.443px">Models marked DNP</div></div>
<div class="row" style="top:678px"><svg class="eye" viewBox="-16 -16 32 32"><circle r="16" fill="#3e3d3e"/><g fill="#7b7b7b"><rect x="-4" y="-8" width="8" height="2" fill="#555"/><rect x="-4" y="6" width="8" height="2" fill="#555"/><rect x="-8" y="-6" width="16" height="2"/><rect x="-10" y="-4" width="20" height="2"/><rect x="-12" y="-2" width="24" height="4"/><rect x="-10" y="2" width="20" height="2"/><rect x="-8" y="4" width="16" height="2"/></g><rect x="-4" y="-4" width="4" height="4" fill="#555"/><path d="M-6.500 9 L10 -8.500" stroke="#444344" stroke-width="3"/><path d="M-9.500 8.500 L7.500 -9" stroke="#8a8a8a" stroke-width="2.600"/></svg><div class="lbl" style="letter-spacing:0.535px">Model Bounding Boxes</div></div>
<div class="row" style="top:736px"><svg class="eye" viewBox="-16 -16 32 32"><circle r="16" fill="#3e3d3e"/><g fill="#e6e2e6"><rect x="-4" y="-8" width="8" height="2" fill="#7c7a7c"/><rect x="-4" y="6" width="8" height="2" fill="#7c7a7c"/><rect x="-8" y="-6" width="16" height="2"/><rect x="-10" y="-4" width="20" height="2"/><rect x="-12" y="-2" width="24" height="4"/><rect x="-10" y="2" width="20" height="2"/><rect x="-8" y="4" width="16" height="2"/></g><rect x="-6" y="-2" width="12" height="4" fill="#aaa8aa"/><rect x="-4" y="-4" width="8" height="8" fill="#5e5c5e"/><rect x="-2" y="-2" width="4" height="4" fill="#eeeaee"/></svg><div class="lbl" style="letter-spacing:0.278px">Values</div></div>
<div class="row" style="top:772px"><svg class="eye" viewBox="-16 -16 32 32"><circle r="16" fill="#3e3d3e"/><g fill="#e6e2e6"><rect x="-4" y="-8" width="8" height="2" fill="#7c7a7c"/><rect x="-4" y="6" width="8" height="2" fill="#7c7a7c"/><rect x="-8" y="-6" width="16" height="2"/><rect x="-10" y="-4" width="20" height="2"/><rect x="-12" y="-2" width="24" height="4"/><rect x="-10" y="2" width="20" height="2"/><rect x="-8" y="4" width="16" height="2"/></g><rect x="-6" y="-2" width="12" height="4" fill="#aaa8aa"/><rect x="-4" y="-4" width="8" height="8" fill="#5e5c5e"/><rect x="-2" y="-2" width="4" height="4" fill="#eeeaee"/></svg><div class="lbl" style="letter-spacing:0.307px">References</div></div>
<div class="row" style="top:808px"><svg class="eye" viewBox="-16 -16 32 32"><circle r="16" fill="#3e3d3e"/><g fill="#e6e2e6"><rect x="-4" y="-8" width="8" height="2" fill="#7c7a7c"/><rect x="-4" y="6" width="8" height="2" fill="#7c7a7c"/><rect x="-8" y="-6" width="16" height="2"/><rect x="-10" y="-4" width="20" height="2"/><rect x="-12" y="-2" width="24" height="4"/><rect x="-10" y="2" width="20" height="2"/><rect x="-8" y="4" width="16" height="2"/></g><rect x="-6" y="-2" width="12" height="4" fill="#aaa8aa"/><rect x="-4" y="-4" width="8" height="8" fill="#5e5c5e"/><rect x="-2" y="-2" width="4" height="4" fill="#eeeaee"/></svg><div class="lbl" style="letter-spacing:0.833px">Footprint Text</div></div>
<div class="row" style="top:844px"><svg class="eye" viewBox="-16 -16 32 32"><circle r="16" fill="#3e3d3e"/><g fill="#7b7b7b"><rect x="-4" y="-8" width="8" height="2" fill="#555"/><rect x="-4" y="6" width="8" height="2" fill="#555"/><rect x="-8" y="-6" width="16" height="2"/><rect x="-10" y="-4" width="20" height="2"/><rect x="-12" y="-2" width="24" height="4"/><rect x="-10" y="2" width="20" height="2"/><rect x="-8" y="4" width="16" height="2"/></g><rect x="-4" y="-4" width="4" height="4" fill="#555"/><path d="M-6.500 9 L10 -8.500" stroke="#444344" stroke-width="3"/><path d="M-9.500 8.500 L7.500 -9" stroke="#8a8a8a" stroke-width="2.600"/></svg><div class="lbl" style="letter-spacing:0.788px">Off-board Silkscreen</div></div>
<div style="position:absolute;left:351px;top:0;width:29px;height:891px;background:#383838;border-left:2px solid #404040"></div>
<div style="position:absolute;left:358px;top:6.500px;width:16px;height:772px;border-radius:8px;background:#a2a2a2"></div>
</div>
<div style="position:absolute;left:14px;top:938px;width:28px;height:28px;border-radius:7px;background:linear-gradient(#5e5e5e,#4c4c4c);box-shadow:0 1px 1px rgba(0,0,0,.4)"></div>
<div class="lbl" style="left:54px;top:934px;letter-spacing:0.691px">Use board stackup colors</div>
<div style="position:absolute;left:0;top:973px;width:380px;height:2px;background:#474747"></div>
<div class="lbl" style="left:14px;top:990px;letter-spacing:0.549px">Presets (Ctrl+Tab):</div>
<div class="dd" style="top:1026px"><i></i><svg style="position:absolute;left:322px;top:8px" width="20" height="24" viewBox="0 0 20 24"><path d="M3.500 8.500 L10 2 L16.500 8.500 M3.500 15.500 L10 22 L16.500 15.500" fill="none" stroke="#e8e8e8" stroke-width="2.4" stroke-linecap="round" stroke-linejoin="round"/></svg></div>
<div class="lbl" style="left:14px;top:1072px;letter-spacing:0.732px">Viewports (Option+Tab):</div>
<div class="dd" style="top:1108px"><i></i><svg style="position:absolute;left:322px;top:8px" width="20" height="24" viewBox="0 0 20 24"><path d="M3.500 8.500 L10 2 L16.500 8.500 M3.500 15.500 L10 22 L16.500 15.500" fill="none" stroke="#e8e8e8" stroke-width="2.4" stroke-linecap="round" stroke-linejoin="round"/></svg></div></div>
<div id="sbar"><span style="left:10px">Reload time 0.019 s</span><span style="left:954px">dx 0.00</span><span style="left:1214px">dy 0.00</span><span style="left:1474px">zoom 0.78</span></div>
<div id="lb"></div><div id="bd"></div>
</div></body></html>
